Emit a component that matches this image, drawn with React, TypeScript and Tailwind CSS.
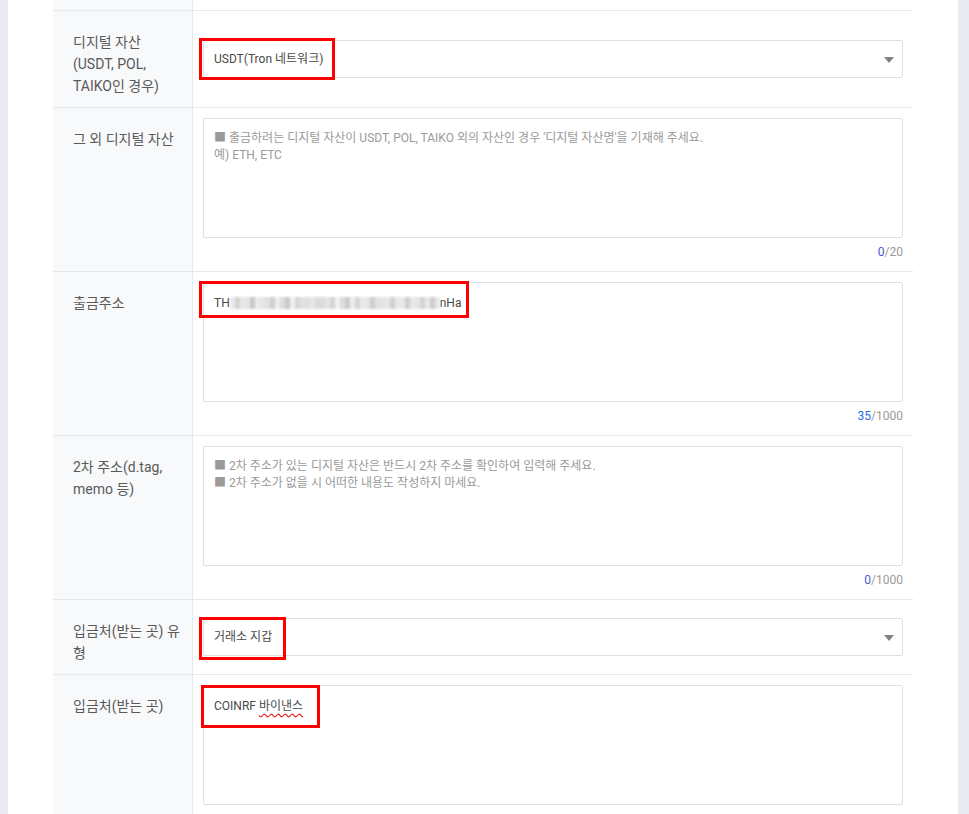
import React from "react";

const FONT = { fontFamily: "Roboto, 'Noto Sans CJK KR', sans-serif" };

const mosaic = [
  "#d8d8d8","#c9c9c9","#e2e2e2","#d0d0d0","#bdbdbd","#e6e6e6","#cfcfcf","#dadada",
  "#c4c4c4","#e0e0e0","#d3d3d3","#bcbcbc","#e4e4e4","#cdcdcd","#d9d9d9","#c7c7c7",
  "#e1e1e1","#d2d2d2","#c0c0c0","#dddddd","#cacaca","#e5e5e5","#d5d5d5","#bfbfbf",
  "#dcdcdc","#cccccc","#e3e3e3","#d1d1d1","#c2c2c2","#dbdbdb","#cecece","#e0e0e0",
  "#c6c6c6","#d7d7d7","#e2e2e2","#c3c3c3","#d4d4d4","#dfdfdf","#cbcbcb","#d6d6d6",
  "#c1c1c1","#e1e1e1",
];

function Label({ children }: { children: React.ReactNode }) {
  return (
    <div className="w-[140px] shrink-0 bg-[#f8f9fb] border-r border-[#e6e8ec] pl-[20px] pr-[6px] pt-[20px] pb-[10px] text-[14px] leading-[22px] text-[#5a5a5a]">
      {children}
    </div>
  );
}

function Row({ label, children, last }: { label: React.ReactNode; children: React.ReactNode; last?: boolean }) {
  return (
    <div className={"flex " + (last ? "" : "border-b border-[#e6e8ec]")}>
      <Label>{label}</Label>
      <div className="flex-1 flex flex-col justify-center px-[10px] py-[10px]">{children}</div>
    </div>
  );
}

function Select({ value, hl }: { value: string; hl?: React.ReactNode }) {
  return (
    <div className="relative h-[38px] border border-[#dddfe3] rounded-[2px] bg-white flex items-center pl-[10px] text-[12px] text-[#4a4a4a]">
      <span>{value}</span>
      <svg className="absolute right-[8px] top-[16px]" width="10" height="6" viewBox="0 0 10 6">
        <path d="M0 0 H10 L5 6 Z" fill="#808080" />
      </svg>
      {hl}
    </div>
  );
}

function Box({ children, hl }: { children?: React.ReactNode; hl?: React.ReactNode }) {
  return (
    <div className="relative h-[120px] border border-[#dddfe3] rounded-[2px] bg-white px-[10px] pt-[11px] text-[12px] leading-[17px]">
      {children}
      {hl}
    </div>
  );
}

function Counter({ n, max }: { n: number; max: number }) {
  return (
    <div className="mt-[6px] text-right text-[12px] leading-[17px] text-[#9a9a9a]">
      <span className={n > 0 ? "text-[#1a73e8]" : "text-[#3f5bd0]"}>{n}</span>/{max}
    </div>
  );
}

function Red({ className }: { className: string }) {
  return <div className={"absolute border-[3px] border-[#ff0000] pointer-events-none " + className} />;
}

export default function App() {
  return (
    <div style={FONT} className="h-[814px] w-[969px] overflow-hidden bg-[#e9ebf0] pl-[8px] pr-[11px]">
      <div className="h-full bg-white px-[45px]">
        {/* top partial row */}
        <div className="flex h-[11px] border-b border-[#e6e8ec]">
          <div className="w-[140px] shrink-0 bg-[#f8f9fb] border-r border-[#e6e8ec]" />
          <div className="flex-1" />
        </div>

        <Row
          label={
            <>
              디지털 자산
              <br />
              (USDT, POL,
              <br />
              TAIKO인 경우)
            </>
          }
        >
          <Select
            value="USDT(Tron 네트워크)"
            hl={<Red className="left-[-5px] top-[-3px] w-[136px] h-[42px]" />}
          />
        </Row>

        <Row label="그 외 디지털 자산">
          <Box>
            <div className="text-[#9a9a9a]">
              ■ 출금하려는 디지털 자산이 USDT, POL, TAIKO 외의 자산인 경우 '디지털 자산명'을 기재해 주세요.
              <br />
              예) ETH, ETC
            </div>
          </Box>
          <Counter n={0} max={20} />
        </Row>

        <Row label="출금주소">
          <Box
            hl={<Red className="left-[-5px] top-[-2px] w-[270px] h-[37px]" />}
          >
            <div className="flex items-center text-[12px] text-[#4a4a4a] leading-[18px]">
              <span>TH</span>
              <span className="flex h-[12px] blur-[1px]">
                {mosaic.map((c, i) => (
                  <span
                    key={i}
                    className="inline-block w-[5px] h-[12px]"
                    style={{ backgroundColor: c, opacity: i % 3 === 0 ? 0.55 : 0.8 }}
                  />
                ))}
              </span>
              <span>nHa</span>
            </div>
          </Box>
          <Counter n={35} max={1000} />
        </Row>

        <Row
          label={
            <>
              2차 주소(d.tag,
              <br />
              memo 등)
            </>
          }
        >
          <Box>
            <div className="text-[#9a9a9a]">
              ■ 2차 주소가 있는 디지털 자산은 반드시 2차 주소를 확인하여 입력해 주세요.
              <br />
              ■ 2차 주소가 없을 시 어떠한 내용도 작성하지 마세요.
            </div>
          </Box>
          <Counter n={0} max={1000} />
        </Row>

        <Row
          label={
            <>
              입금처(받는 곳) 유
              <br />형
            </>
          }
        >
          <Select
            value="거래소 지갑"
            hl={<Red className="left-[-5px] top-[-2px] w-[87px] h-[43px]" />}
          />
        </Row>

        <Row label="입금처(받는 곳)" last>
          <Box hl={<Red className="left-[-3px] top-[-1px] w-[119px] h-[43px]" />}>
            <div className="text-[12px] text-[#4a4a4a] leading-[18px]">
              COINRF{" "}
              <span className="underline decoration-wavy decoration-[#e02020] underline-offset-[3px]">바이낸스</span>
            </div>
          </Box>
        </Row>
      </div>
    </div>
  );
}
